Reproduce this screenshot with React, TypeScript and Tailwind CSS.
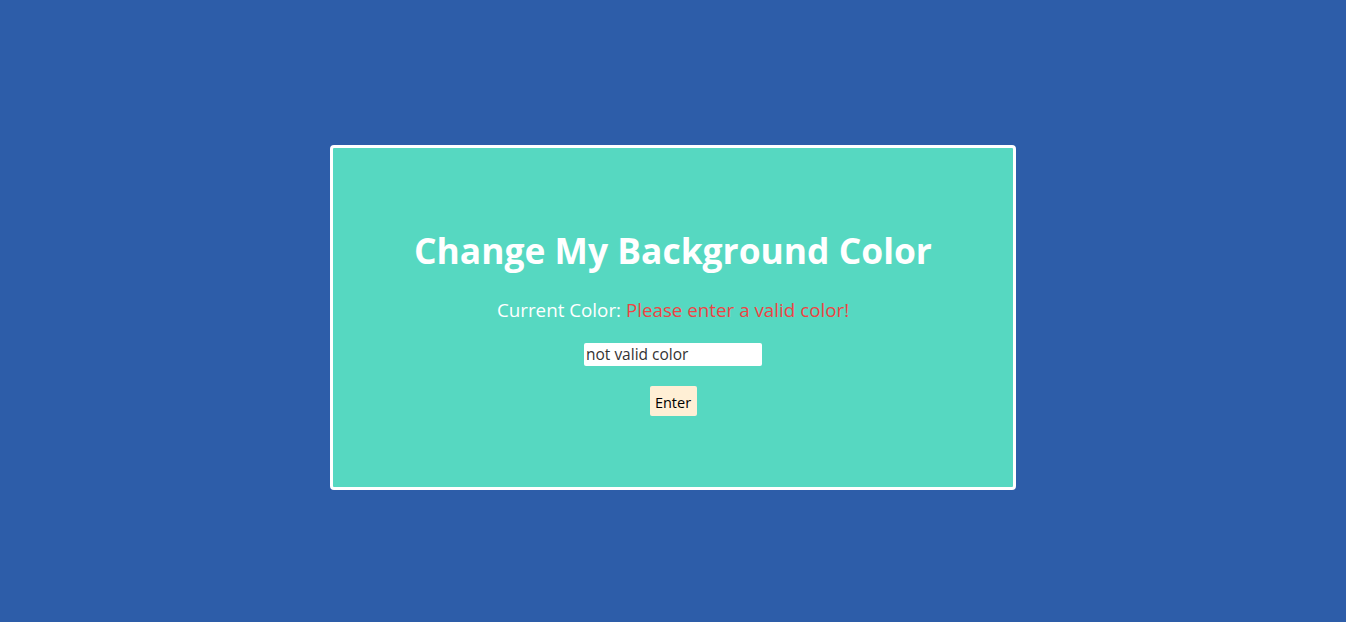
import React, { useState } from 'react';

const App: React.FC = () => {
  const [value, setValue] = useState('not valid color');

  return (
    <div className="h-[622px] w-full bg-[#2d5da9] flex justify-center pt-[145px] font-['Open_Sans',sans-serif]">
      <div className="w-[686px] h-[345px] bg-[#56d8c1] border-[3px] border-white rounded-[4px] flex flex-col items-center pt-[78px]">
        <h1 className="text-[35.4px] leading-[48px] font-bold text-white">
          Change My Background Color
        </h1>
        <p className="mt-[22px] text-[18.8px] leading-[28px] text-white">
          Current Color: <span className="text-[#ee4444]">Please enter a valid color!</span>
        </p>
        <input
          value={value}
          onChange={(e) => setValue(e.target.value)}
          className="mt-[19px] w-[178px] h-[23px] bg-white rounded-[2px] px-[2px] pt-[1px] text-[15.5px] text-[#333] outline-none"
        />
        <button className="mt-[20px] w-[47px] h-[30px] pt-[3px] bg-[#ffefd5] rounded-[2px] text-[14.5px] text-black">
          Enter
        </button>
      </div>
    </div>
  );
};

export default App;
